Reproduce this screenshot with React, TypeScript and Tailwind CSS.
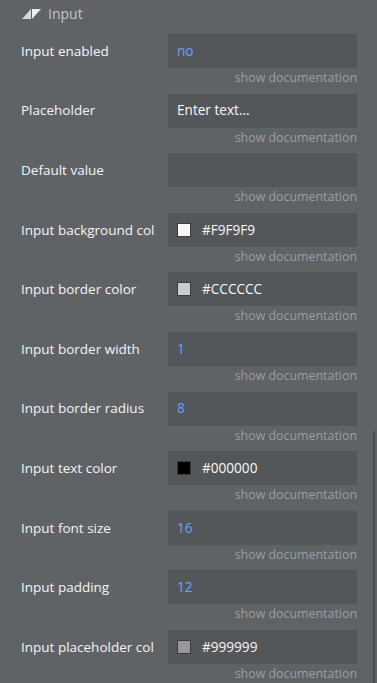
import React from 'react'

type Row = {
  label: string
  value?: string
  kind: 'text' | 'number' | 'color' | 'plain'
  swatch?: string
}

const ROWS: Row[] = [
  { label: 'Input enabled', value: 'no', kind: 'number' },
  { label: 'Placeholder', value: 'Enter text...', kind: 'plain' },
  { label: 'Default value', value: '', kind: 'plain' },
  { label: 'Input background color', value: '#F9F9F9', kind: 'color', swatch: '#F9F9F9' },
  { label: 'Input border color', value: '#CCCCCC', kind: 'color', swatch: '#CCCCCC' },
  { label: 'Input border width', value: '1', kind: 'number' },
  { label: 'Input border radius', value: '8', kind: 'number' },
  { label: 'Input text color', value: '#000000', kind: 'color', swatch: '#000000' },
  { label: 'Input font size', value: '16', kind: 'number' },
  { label: 'Input padding', value: '12', kind: 'number' },
  { label: 'Input placeholder color', value: '#999999', kind: 'color', swatch: '#999999' },
]

function PropertyRow({ row }: { row: Row }) {
  return (
    <div className="h-[59.6px] flex flex-col">
      <div className="flex items-center h-[34px]">
        <div className="w-[133px] ml-[21px] overflow-hidden whitespace-nowrap text-[13.5px] text-[#f4f4f4]">
          {row.label}
        </div>
        <div className="ml-[14px] w-[189px] h-[34px] bg-[#53575a] flex items-center pl-[9px] text-[13.6px]">
          {row.kind === 'color' && (
            <span
              className="w-[14px] h-[14px] border border-[#3a3c3e] mr-[11px] shrink-0"
              style={{ backgroundColor: row.swatch }}
            />
          )}
          <span className={row.kind === 'number' ? 'text-[#69a3f5]' : 'text-[#f7f7f7]'}>
            {row.value}
          </span>
        </div>
      </div>
      <div className="w-[357px] mt-[1px] text-right text-[12.4px] leading-[18px] text-[#9a9ea0]">
        show documentation
      </div>
    </div>
  )
}

export default function App() {
  return (
    <div
      className="relative w-[377px] h-[683px] overflow-hidden bg-[#5f6366]"
      style={{ fontFamily: '"Open Sans", "Liberation Sans", sans-serif' }}
    >
      <div className="h-[27px] flex items-center pl-[22px] gap-[7px]">
        <svg width="19" height="10" viewBox="0 0 19 10">
          <polygon points="0,10 9,0 9,10" fill="#d6d8d9" />
          <polygon points="10,0 19,0 10,10" fill="#eeeeee" />
        </svg>
        <span className="text-[14px] text-[#c2c5c7] -mt-[1px]">Input</span>
      </div>
      <div className="pt-[7px]">
        {ROWS.map((row) => (
          <PropertyRow key={row.label} row={row} />
        ))}
      </div>
      {/* scrollbar thumb */}
      <div className="absolute right-[2px] top-[431px] bottom-0 w-[2px] bg-[#4c4f52]" />
    </div>
  )
}
